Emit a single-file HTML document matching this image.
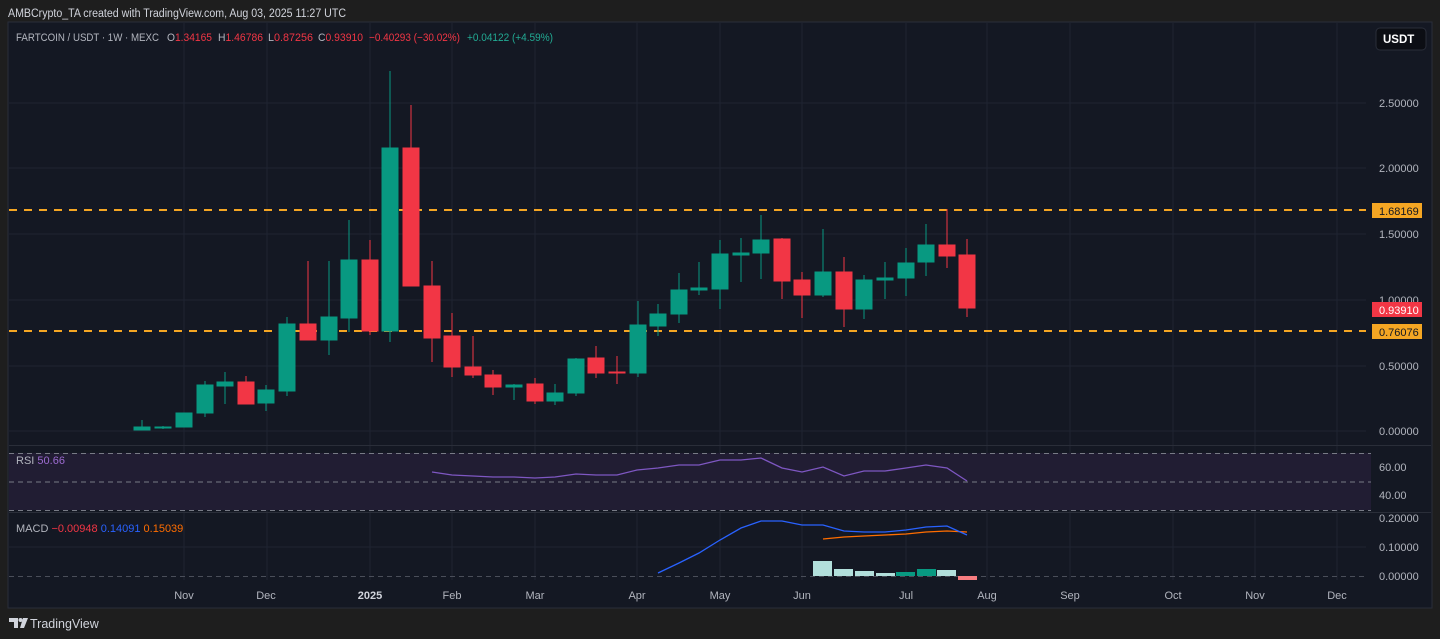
<!DOCTYPE html>
<html><head><meta charset="utf-8"><style>
html,body{margin:0;padding:0;background:#1f1f1f;width:1440px;height:639px;overflow:hidden;font-family:"Liberation Sans",sans-serif}
svg{position:absolute;left:0;top:0}
</style></head><body>
<svg width="1440" height="639" viewBox="0 0 1440 639" font-family="Liberation Sans, sans-serif">
<rect width="1440" height="639" fill="#1e1e1e"/>
<text x="8" y="17" font-size="11.5" fill="#d1d4dc" textLength="338" lengthAdjust="spacingAndGlyphs">AMBCrypto_TA created with TradingView.com, Aug 03, 2025 11:27 UTC</text>
<rect x="8" y="22" width="1424" height="586" fill="#141823" stroke="#2a2e39"/>
<g stroke="#1f2431" stroke-width="1">
<line x1="9" x2="1366" y1="103" y2="103"/><line x1="9" x2="1366" y1="168" y2="168"/><line x1="9" x2="1366" y1="234" y2="234"/><line x1="9" x2="1366" y1="300" y2="300"/><line x1="9" x2="1366" y1="366" y2="366"/><line x1="9" x2="1366" y1="431" y2="431"/>
<line x1="9" x2="1366" y1="547" y2="547"/>
<line x1="184" x2="184" y1="23" y2="580"/><line x1="267" x2="267" y1="23" y2="580"/><line x1="370" x2="370" y1="23" y2="580"/><line x1="452" x2="452" y1="23" y2="580"/><line x1="535" x2="535" y1="23" y2="580"/><line x1="637" x2="637" y1="23" y2="580"/><line x1="720" x2="720" y1="23" y2="580"/><line x1="802" x2="802" y1="23" y2="580"/><line x1="906" x2="906" y1="23" y2="580"/><line x1="987" x2="987" y1="23" y2="580"/><line x1="1070" x2="1070" y1="23" y2="580"/><line x1="1173" x2="1173" y1="23" y2="580"/><line x1="1255" x2="1255" y1="23" y2="580"/><line x1="1337" x2="1337" y1="23" y2="580"/>
</g>
<line x1="9" x2="1431" y1="445.5" y2="445.5" stroke="#2a2e39"/>
<line x1="9" x2="1431" y1="512.5" y2="512.5" stroke="#2a2e39"/>
<rect x="9" y="453" width="1362" height="57" fill="#211d33"/>
<g stroke="#787b86" stroke-dasharray="5,4" stroke-width="1">
<line x1="9" x2="1371" y1="453.5" y2="453.5"/><line x1="9" x2="1371" y1="482" y2="482"/><line x1="9" x2="1371" y1="510.5" y2="510.5"/>
<line x1="9" x2="1366" y1="576.5" y2="576.5" stroke="#4a4e59"/>
</g>
<g stroke="#f5a623" stroke-width="2" stroke-dasharray="8,7">
<line x1="9" x2="1366" y1="210" y2="210"/><line x1="9" x2="1366" y1="331" y2="331"/>
</g>
<g stroke-width="1">
<g fill="#089981" stroke="#089981">
<line x1="142" x2="142" y1="420" y2="430"/><rect x="134" y="427" width="16" height="3"/>
<line x1="163" x2="163" y1="426" y2="429"/><rect x="155" y="427" width="16" height="1"/>
<rect x="176" y="413" width="16" height="14"/>
<line x1="205" x2="205" y1="381" y2="417"/><rect x="197" y="385" width="16" height="28"/>
<line x1="225" x2="225" y1="372" y2="404"/><rect x="217" y="382" width="16" height="4"/>
<line x1="266" x2="266" y1="385" y2="411"/><rect x="258" y="390" width="16" height="13"/>
<line x1="287" x2="287" y1="317" y2="396"/><rect x="279" y="324" width="16" height="67"/>
<line x1="329" x2="329" y1="261" y2="355"/><rect x="321" y="317" width="16" height="23"/>
<line x1="349" x2="349" y1="220" y2="332"/><rect x="341" y="260" width="16" height="58"/>
<line x1="390" x2="390" y1="71" y2="342"/><rect x="382" y="148" width="16" height="183"/>
<line x1="514" x2="514" y1="384" y2="400"/><rect x="506" y="385" width="16" height="2"/>
<line x1="555" x2="555" y1="384" y2="405"/><rect x="547" y="393" width="16" height="8"/>
<line x1="576" x2="576" y1="358" y2="396"/><rect x="568" y="359" width="16" height="34"/>
<line x1="638" x2="638" y1="301" y2="377"/><rect x="630" y="325" width="16" height="48"/>
<line x1="658" x2="658" y1="304" y2="336"/><rect x="650" y="314" width="16" height="12"/>
<line x1="679" x2="679" y1="273" y2="323"/><rect x="671" y="290" width="16" height="24"/>
<line x1="699" x2="699" y1="262" y2="295"/><rect x="691" y="288" width="16" height="2"/>
<line x1="720" x2="720" y1="240" y2="309"/><rect x="712" y="254" width="16" height="35"/>
<line x1="741" x2="741" y1="238" y2="282"/><rect x="733" y="253" width="16" height="2"/>
<line x1="761" x2="761" y1="215" y2="279"/><rect x="753" y="240" width="16" height="13"/>
<line x1="823" x2="823" y1="229" y2="297"/><rect x="815" y="272" width="16" height="23"/>
<line x1="864" x2="864" y1="275" y2="319"/><rect x="856" y="280" width="16" height="29"/>
<line x1="885" x2="885" y1="262" y2="299"/><rect x="877" y="278" width="16" height="2"/>
<line x1="906" x2="906" y1="248" y2="296"/><rect x="898" y="263" width="16" height="15"/>
<line x1="926" x2="926" y1="224" y2="276"/><rect x="918" y="245" width="16" height="17"/>
</g>
<g fill="#f23645" stroke="#f23645">
<line x1="246" x2="246" y1="376" y2="404"/><rect x="238" y="382" width="16" height="22"/>
<line x1="308" x2="308" y1="261" y2="340"/><rect x="300" y="324" width="16" height="16"/>
<line x1="370" x2="370" y1="240" y2="335"/><rect x="362" y="260" width="16" height="71"/>
<line x1="411" x2="411" y1="105" y2="286"/><rect x="403" y="148" width="16" height="138"/>
<line x1="432" x2="432" y1="261" y2="362"/><rect x="424" y="286" width="16" height="52"/>
<line x1="452" x2="452" y1="313" y2="377"/><rect x="444" y="336" width="16" height="31"/>
<line x1="473" x2="473" y1="336" y2="378"/><rect x="465" y="367" width="16" height="8"/>
<line x1="493" x2="493" y1="370" y2="395"/><rect x="485" y="375" width="16" height="12"/>
<line x1="535" x2="535" y1="378" y2="404"/><rect x="527" y="384" width="16" height="17"/>
<line x1="596" x2="596" y1="346" y2="378"/><rect x="588" y="358" width="16" height="15"/>
<line x1="617" x2="617" y1="356" y2="384"/><rect x="609" y="372" width="16" height="1"/>
<line x1="782" x2="782" y1="238" y2="299"/><rect x="774" y="239" width="16" height="42"/>
<line x1="802" x2="802" y1="272" y2="318"/><rect x="794" y="280" width="16" height="15"/>
<line x1="844" x2="844" y1="257" y2="327"/><rect x="836" y="272" width="16" height="37"/>
<line x1="947" x2="947" y1="209" y2="268"/><rect x="939" y="245" width="16" height="11"/>
<line x1="967" x2="967" y1="239" y2="317"/><rect x="959" y="255" width="16" height="53"/>
</g>
</g>
<polyline fill="none" stroke="#7e57c2" stroke-width="1.3" points="432,472 452,475 473,476 493,477 514,477 535,478 555,477 576,474 596,475 617,475 637,470 658,468 679,465 699,465 720,460 741,460 761,458 782,468 802,472 823,467 844,476 864,471 885,471 906,468 926,465 947,468 967,481"/>
<g>
<rect x="813" y="561" width="19" height="15" fill="#b2dfdb"/>
<rect x="834" y="569" width="19" height="7" fill="#b2dfdb"/>
<rect x="855" y="571" width="19" height="5" fill="#b2dfdb"/>
<rect x="876" y="573" width="19" height="3" fill="#b2dfdb"/>
<rect x="896" y="572" width="19" height="4" fill="#089981"/>
<rect x="917" y="569" width="19" height="7" fill="#089981"/>
<rect x="937" y="570" width="19" height="6" fill="#b2dfdb"/>
<rect x="958" y="576" width="19" height="4" fill="#f77c80"/>
</g>
<polyline fill="none" stroke="#ff6d00" stroke-width="1.3" points="823,539 844,537 864,536 885,535 906,534 926,532 947,531 967,532"/>
<polyline fill="none" stroke="#2962ff" stroke-width="1.3" points="658,573 679,563 699,553 720,540 741,528 761,521 782,521 802,525 823,525 844,531 864,532 885,532 906,530 926,527 947,526 967,535"/>
<g font-size="11" fill="#b2b5be" lengthAdjust="spacingAndGlyphs">
<text x="16" y="41" textLength="143" lengthAdjust="spacingAndGlyphs">FARTCOIN / USDT · 1W · MEXC</text>
<text x="167" y="41" textLength="45" lengthAdjust="spacingAndGlyphs">O<tspan fill="#f23645">1.34165</tspan></text>
<text x="218" y="41" textLength="45" lengthAdjust="spacingAndGlyphs">H<tspan fill="#f23645">1.46786</tspan></text>
<text x="268" y="41" textLength="45" lengthAdjust="spacingAndGlyphs">L<tspan fill="#f23645">0.87256</tspan></text>
<text x="318" y="41" textLength="45" lengthAdjust="spacingAndGlyphs">C<tspan fill="#f23645">0.93910</tspan></text>
<text x="369" y="41" textLength="91" lengthAdjust="spacingAndGlyphs" fill="#f23645">−0.40293 (−30.02%)</text>
<text x="467" y="41" textLength="86" lengthAdjust="spacingAndGlyphs" fill="#22ab94">+0.04122 (+4.59%)</text>
</g>
<text x="16" y="464" font-size="11" fill="#b2b5be">RSI <tspan fill="#9c6bd0">50.66</tspan></text>
<text x="16" y="532" font-size="11" fill="#b2b5be">MACD <tspan fill="#f23645">−0.00948</tspan> <tspan fill="#2962ff">0.14091</tspan> <tspan fill="#ff6d00">0.15039</tspan></text>
<rect x="1376" y="28" width="50" height="22" rx="4" fill="#0c0e14" stroke="#2a2e39"/>
<text x="1383" y="43" font-size="11.5" fill="#fff" font-weight="bold">USDT</text>
<g font-size="11" fill="#b2b5be">
<text x="1379" y="107">2.50000</text><text x="1379" y="172">2.00000</text><text x="1379" y="238">1.50000</text><text x="1379" y="304">1.00000</text><text x="1379" y="370">0.50000</text><text x="1379" y="435">0.00000</text>
<text x="1379" y="471">60.00</text><text x="1379" y="499">40.00</text>
<text x="1379" y="522">0.20000</text><text x="1379" y="551">0.10000</text><text x="1379" y="580">0.00000</text>
</g>
<rect x="1372" y="203" width="50" height="15" fill="#f5a623"/><text x="1379" y="215" font-size="11" fill="#131722">1.68169</text>
<rect x="1372" y="302" width="50" height="15" fill="#f23645"/><text x="1379" y="314" font-size="11" fill="#fff">0.93910</text>
<rect x="1372" y="324" width="50" height="15" fill="#f5a623"/><text x="1379" y="336" font-size="11" fill="#131722">0.76076</text>
<g font-size="11" fill="#b2b5be" text-anchor="middle">
<text x="184" y="599">Nov</text><text x="266" y="599">Dec</text><text x="370" y="599" font-weight="bold" fill="#d1d4dc">2025</text><text x="452" y="599">Feb</text><text x="535" y="599">Mar</text><text x="637" y="599">Apr</text><text x="720" y="599">May</text><text x="802" y="599">Jun</text><text x="906" y="599">Jul</text><text x="987" y="599">Aug</text><text x="1070" y="599">Sep</text><text x="1173" y="599">Oct</text><text x="1255" y="599">Nov</text><text x="1337" y="599">Dec</text>
</g>
<g fill="#d1d4dc">
<path d="M9 618h9v10h-4v-6h-5z"/><circle cx="20.5" cy="620" r="2"/><path d="M23 618h5l-4 10h-4z"/>
</g>
<text x="30" y="628" font-size="12.5" fill="#d1d4dc">TradingView</text>
</svg>
</body></html>
